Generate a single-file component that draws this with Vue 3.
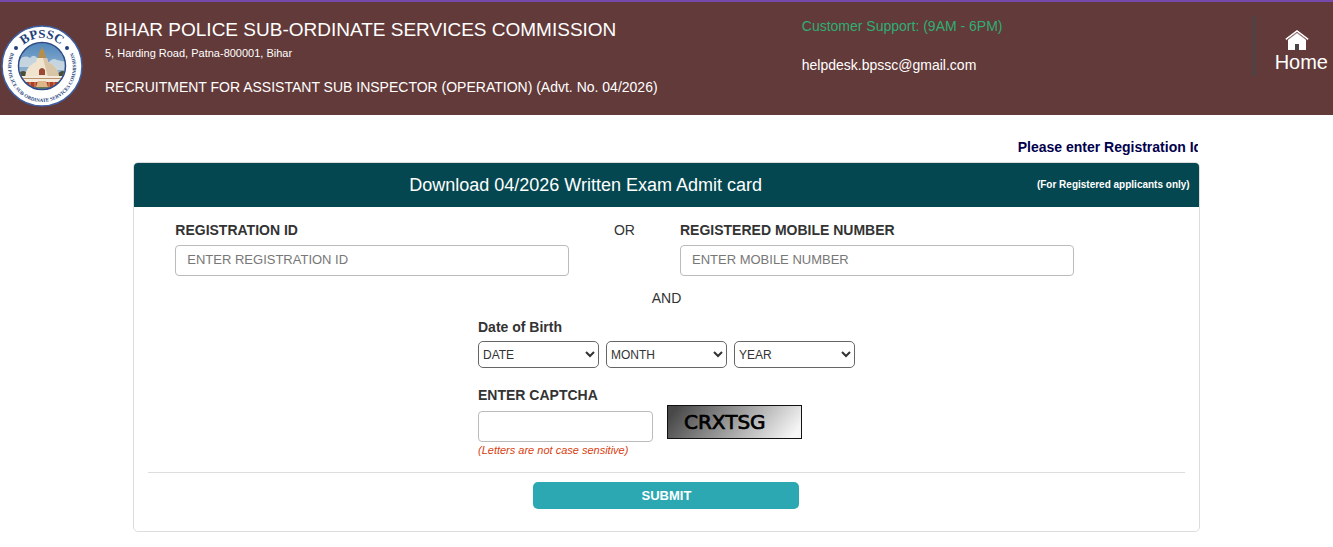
<template>
  <div class="page">
    <header class="site-header">
      <div class="brand">
        <svg class="logo" viewBox="0 0 84 86" role="img" aria-label="BPSSC">
          <defs>
            <path id="arcTop" d="M14 43a28 28 0 0 1 56 0" />
            <path id="arcBottom" d="M11.500 28.500a34 35 0 1 0 61 0" />
            <clipPath id="sealClip">
              <circle cx="42" cy="43" r="23" />
            </clipPath>
            <linearGradient id="sky" x1="0" y1="0" x2="0" y2="1">
              <stop offset="0" stop-color="#4f87bd" />
              <stop offset="1" stop-color="#b9cbd8" />
            </linearGradient>
          </defs>
          <circle cx="42" cy="43" r="40" fill="#fff" stroke="#3d5fa3" stroke-width="1.500" />
          <g clip-path="url(#sealClip)">
            <rect x="18" y="19" width="48" height="48" fill="url(#sky)" />
            <path d="M18 38q6-7 12-3 4-5 8 1l-4 8H18zM48 40q5-6 9-3l9 2v8H50z" fill="#d7e1e6" opacity=".8" />
            <path d="M18 51q4-5 8-2l3 9H18zM66 49q-5-3-9 3v8h9z" fill="#4b4f35" />
            <path d="M42 23l-1 4h-1l-2 9h8l-2-9h-1z" fill="#b88e47" />
            <path d="M37 35h10l1 4q10 4 11 15H25q1-11 11-15z" fill="#f0e4cf" />
            <path d="M43 35h4l1 4q10 4 11 15H48z" fill="#d8c4a6" />
            <path d="M20 53h44v6H20z" fill="#f3eadb" />
            <path d="M20 55h44v1H20z" fill="#b99169" />
            <path d="M39 52v-5q3-4 6 0v5z" fill="#9b4935" />
            <path d="M19 59h46v5H19z" fill="#ad3f2a" />
            <path d="M25 59v5m5-5v5m5-5v5m14-5v5m5-5v5m5-5v5" stroke="#d99a67" stroke-width="1" />
            <path d="M38 58h8l2 6H36z" fill="#dfb58a" />
            <path d="M20 64h44v4H20z" fill="#6e7552" />
          </g>
          <circle cx="42" cy="43" r="23.500" fill="none" stroke="#2c4a86" stroke-width="1.500" />
          <circle cx="16" cy="25" r="2" fill="#233f7c" />
          <circle cx="67" cy="25" r="2" fill="#233f7c" />
          <text class="seal-name">
            <textPath href="#arcTop" startOffset="50%" text-anchor="middle">BPSSC</textPath>
          </text>
          <text class="seal-ring">
            <textPath href="#arcBottom" startOffset="50%" text-anchor="middle">BIHAR POLICE SUB-ORDINATE SERVICES COMMISSION</textPath>
          </text>
        </svg>
        <div class="brand-text">
          <h1>BIHAR POLICE SUB-ORDINATE SERVICES COMMISSION</h1>
          <p class="address">5, Harding Road, Patna-800001, Bihar</p>
          <p class="recruitment">RECRUITMENT FOR ASSISTANT SUB INSPECTOR (OPERATION) (Advt. No. 04/2026)</p>
        </div>
      </div>
      <div class="support">
        <p class="hours">Customer Support: (9AM - 6PM)</p>
        <a class="mail" href="mailto:helpdesk.bpssc@gmail.com">helpdesk.bpssc@gmail.com</a>
      </div>
      <nav class="home">
        <a href="#">
          <svg class="home-icon" viewBox="0 0 24 20" aria-hidden="true">
            <path d="M3 9.500L12 2.500l9 7V20h-7v-6h-4v6H3z" fill="#fff" />
            <path d="M10 14h4v6h-4z" fill="#4c4444" />
            <path d="M.8 9.300L12 .9l11.200 8.400" fill="none" stroke="#fff" stroke-width="1.500" />
            <path d="M2 10.300L12 2.800l10 7.500" fill="none" stroke="#8f7170" stroke-width=".7" />
          </svg>
          <span>Home</span>
        </a>
      </nav>
    </header>

    <main>
      <div class="notice"><p>Please enter Registration Id</p></div>

      <section class="card">
        <div class="card-header">
          <h2>Download 04/2026 Written Exam Admit card</h2>
          <span>(For Registered applicants only)</span>
        </div>

        <form class="card-body" @submit.prevent>
          <div class="identity">
            <div class="field">
              <label for="regId">REGISTRATION ID</label>
              <input id="regId" v-model="form.regId" type="text" placeholder="ENTER REGISTRATION ID" />
            </div>
            <div class="joiner">OR</div>
            <div class="field">
              <label for="mobile">REGISTERED MOBILE NUMBER</label>
              <input id="mobile" v-model="form.mobile" type="text" placeholder="ENTER MOBILE NUMBER" />
            </div>
          </div>

          <div class="joiner and">AND</div>

          <div class="details">
            <label for="date">Date of Birth</label>
            <div class="dob">
              <select v-for="part in dobParts" :id="part" :key="part" v-model="form[part]" :aria-label="part">
                <option value="">{{ part.toUpperCase() }}</option>
              </select>
            </div>

            <label for="captcha">ENTER CAPTCHA</label>
            <div class="captcha">
              <input id="captcha" v-model="form.captcha" type="text" autocomplete="off" />
              <svg class="captcha-image" viewBox="0 0 135 34">
                <defs>
                  <linearGradient id="shade" x1="0" y1="0.400" x2="1" y2="0.600">
                    <stop offset="0" stop-color="#484848" />
                    <stop offset="1" stop-color="#f6f6f6" />
                  </linearGradient>
                </defs>
                <rect x=".5" y=".5" width="134" height="33" fill="url(#shade)" stroke="#111" />
                <text x="17" y="24" stroke="#000" stroke-width=".7">CRXTSG</text>
              </svg>
            </div>
            <p class="hint">(Letters are not case sensitive)</p>
          </div>

          <hr />
          <button type="submit">SUBMIT</button>
        </form>
      </section>
    </main>
  </div>
</template>

<script setup>
import { reactive } from "vue";

const dobParts = ["date", "month", "year"];

const form = reactive({
  regId: "",
  mobile: "",
  date: "",
  month: "",
  year: "",
  captcha: "",
});
</script>

<style>
body {
  margin: 0;
  background: #fff;
}
</style>

<style scoped>
.page {
  font-family: "Liberation Sans", Arial, sans-serif;
  font-size: 14px;
  line-height: 20px;
  color: #333;
}

.page * {
  box-sizing: border-box;
}

h1,
h2,
p {
  margin: 0;
  font-weight: 400;
}

/* Header */
.site-header {
  display: flex;
  min-height: 115px;
  border-top: 2px solid #7549ae;
  background: #623a39;
  color: #fff;
}

.brand {
  display: flex;
  flex: 0 0 60%;
  gap: 21px;
}

.logo {
  flex: none;
  width: 84px;
  height: 86px;
  margin-top: 21px;
}

.seal-name {
  fill: #233f7c;
  font: bold 13px "Liberation Serif", serif;
}

.seal-ring {
  fill: #233f7c;
  font: bold 5px "Liberation Serif", serif;
}

.brand-text {
  padding-top: 18px;
}

h1 {
  font-size: 19px;
}

.address {
  margin-top: 3px;
  font-size: 11px;
}

.recruitment {
  margin-top: 14px;
}

.support {
  flex: 1;
  padding: 14px 0 0 2px;
}

.hours {
  color: #2fae74;
}

.mail {
  display: block;
  margin-top: 19px;
  color: #fff;
  text-decoration: none;
}

.home {
  align-self: flex-start;
  margin-top: 14px;
  padding: 14px 5px 0 20px;
  height: 60px;
  border-left: 2px solid #42474a;
}

.home a {
  display: flex;
  flex-direction: column;
  align-items: center;
  font-size: 20px;
  line-height: 24px;
  color: #fff;
  text-decoration: none;
}

.home-icon {
  width: 24px;
  height: 20px;
  margin-right: 8px;
}

/* Content */
main {
  width: 80%;
  margin: 0 auto;
}

.notice {
  padding: 22px 2px 5px 0;
}

.notice p {
  width: 180px;
  margin-left: auto;
  overflow: hidden;
  font-weight: 700;
  white-space: nowrap;
  color: #00004d;
}

.card {
  border: 1px solid #ddd;
  border-radius: 5px;
}

.card-header {
  display: flex;
  align-items: center;
  height: 44px;
  padding-right: 9px;
  border-radius: 4px 4px 0 0;
  background: #044750;
  color: #fff;
}

.card-header h2 {
  flex: 1;
  font-size: 18px;
  text-align: center;
}

.card-header span {
  font-size: 10px;
  font-weight: 700;
}

.card-body {
  padding: 13px 14px 22px;
}

.identity {
  display: grid;
  grid-template-columns: 39% 11% 39%;
  padding-left: 27px;
}

label {
  display: block;
  font-weight: 700;
}

.joiner {
  text-align: center;
}

.and {
  margin: 12px 0 9px;
}

input {
  display: block;
  width: 100%;
  height: 31px;
  padding: 0 11px 3px;
  border: 1px solid #bbb;
  border-radius: 4px;
  background: #fff;
  font: inherit;
  font-size: 13px;
  color: #333;
}

.field input {
  margin-top: 5px;
}

input::placeholder {
  color: #777;
}

.details {
  width: 377px;
  margin: 0 auto;
}

.dob {
  display: flex;
  gap: 7px;
  margin: 4px 0 17px;
}

select {
  flex: 1;
  min-width: 0;
  height: 27px;
  border: 1px solid #666;
  border-radius: 5px;
  background: #fff;
  font-family: inherit;
  font-size: 12px;
  color: #333;
}

.captcha {
  display: flex;
  align-items: flex-end;
  gap: 14px;
}

.captcha input {
  width: 175px;
  margin-top: 4px;
}

.captcha-image {
  width: 135px;
  height: 34px;
  margin-bottom: 3px;
}

.captcha-image text {
  font: 20px "DejaVu Sans", sans-serif;
}

.hint {
  font-size: 11px;
  line-height: 16px;
  font-style: italic;
  color: #d9400f;
}

hr {
  margin: 14px 0 9px;
  border: 0;
  border-top: 1px solid #ddd;
}

button {
  display: block;
  width: 266px;
  height: 27px;
  margin: 0 auto;
  border: 0;
  border-radius: 5px;
  background: #2ba8b1;
  font: inherit;
  font-size: 13px;
  font-weight: 700;
  color: #fff;
  cursor: pointer;
}
</style>
